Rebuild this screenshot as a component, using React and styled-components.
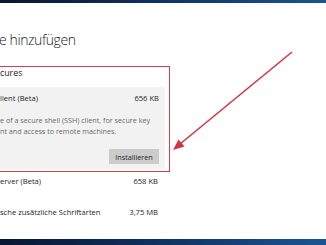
import React from 'react';
import styled, { createGlobalStyle } from 'styled-components';

const GlobalStyle = createGlobalStyle`
  html, body {
    margin: 0;
    padding: 0;
    background: #fff;
    overflow: hidden;
  }
`;

const Page = styled.div`
  position: relative;
  width: 326px;
  height: 245px;
  display: flex;
  flex-direction: column;
  overflow: hidden;
  font-family: "Open Sans", "Noto Sans", sans-serif;
  color: #1e1e1e;
`;

const Taskbar = styled.div`
  flex: 0 0 ${(p) => p.h}px;
  background: linear-gradient(90deg, #081631 0%, #0f2f5c 45%, #1a5593 100%);
`;

const Main = styled.div`
  flex: 1;
  min-height: 0;
  overflow: hidden;
  display: flex;
  flex-direction: column;
`;

const Title = styled.h1`
  margin: 28px 0 0 -1px;
  font-size: 14px;
  line-height: 18px;
  font-weight: 300;
  letter-spacing: -0.4px;
  color: #222;
`;

const Highlight = styled.section`
  margin: 17px 0 0 -12px;
  width: 176px;
  border: 1px solid #d2404c;
  padding: 0 4px 2px 0;
`;

const GroupLabel = styled.div`
  padding-left: 11px;
  font-size: 8.8px;
  line-height: 13px;
  margin-bottom: 7px;
  color: #1e1e1e;
`;

const Selected = styled.div`
  background: #f2f2f2;
  padding: 4px 6px 5px 11px;
  display: flex;
  flex-direction: column;
`;

const ItemHead = styled.div`
  display: flex;
  justify-content: space-between;
  font-size: 7.6px;
  line-height: 14px;
  color: #1e1e1e;
`;

const Description = styled.p`
  margin: 10px 0 0;
  font-size: 7.2px;
  line-height: 10.5px;
  color: #6a6a6a;
  white-space: nowrap;
`;

const Actions = styled.div`
  display: flex;
  justify-content: flex-end;
  margin-top: 13px;
`;

const Button = styled.button`
  width: 50px;
  height: 15px;
  border: none;
  padding: 0;
  background: #cccccc;
  font-family: inherit;
  font-size: 7.2px;
  color: #1e1e1e;
`;

const List = styled.div`
  width: 164px;
  margin-top: 2px;
`;

const Row = styled.div`
  height: 31px;
  padding-right: 6px;
  display: flex;
  justify-content: space-between;
  align-items: flex-start;
  font-size: 7.6px;
  line-height: 14px;
  white-space: nowrap;
  color: #1e1e1e;
`;

const Arrow = styled.svg`
  position: absolute;
  left: 0;
  top: 0;
  pointer-events: none;
`;

const rows = [
  { name: 'erver (Beta)', size: '658 KB' },
  { name: 'sche zusätzliche Schriftarten', size: '3,75 MB' },
  { name: 'entwicklermodus', size: '100 MB' },
];

export default function App() {
  return (
    <Page>
      <GlobalStyle />
      <Taskbar h={3} />
      <Main>
        <Title>e hinzufügen</Title>
        <Highlight>
          <GroupLabel>cures</GroupLabel>
          <Selected>
            <ItemHead>
              <span>lient (Beta)</span>
              <span>656 KB</span>
            </ItemHead>
            <Description>
              e of a secure shell (SSH) client, for secure key
              <br />
              nt and access to remote machines.
            </Description>
            <Actions>
              <Button>Installieren</Button>
            </Actions>
          </Selected>
        </Highlight>
        <List>
          {rows.map((r) => (
            <Row key={r.name}>
              <span>{r.name}</span>
              <span>{r.size}</span>
            </Row>
          ))}
        </List>
      </Main>
      <Taskbar h={6} />
      <Arrow width="326" height="245" viewBox="0 0 326 245">
        <line x1="292" y1="52" x2="180" y2="144" stroke="#d3343f" strokeWidth="1.6" />
        <polygon points="173,150 184.5,146.5 178.5,139.5" fill="#d3343f" />
      </Arrow>
    </Page>
  );
}
